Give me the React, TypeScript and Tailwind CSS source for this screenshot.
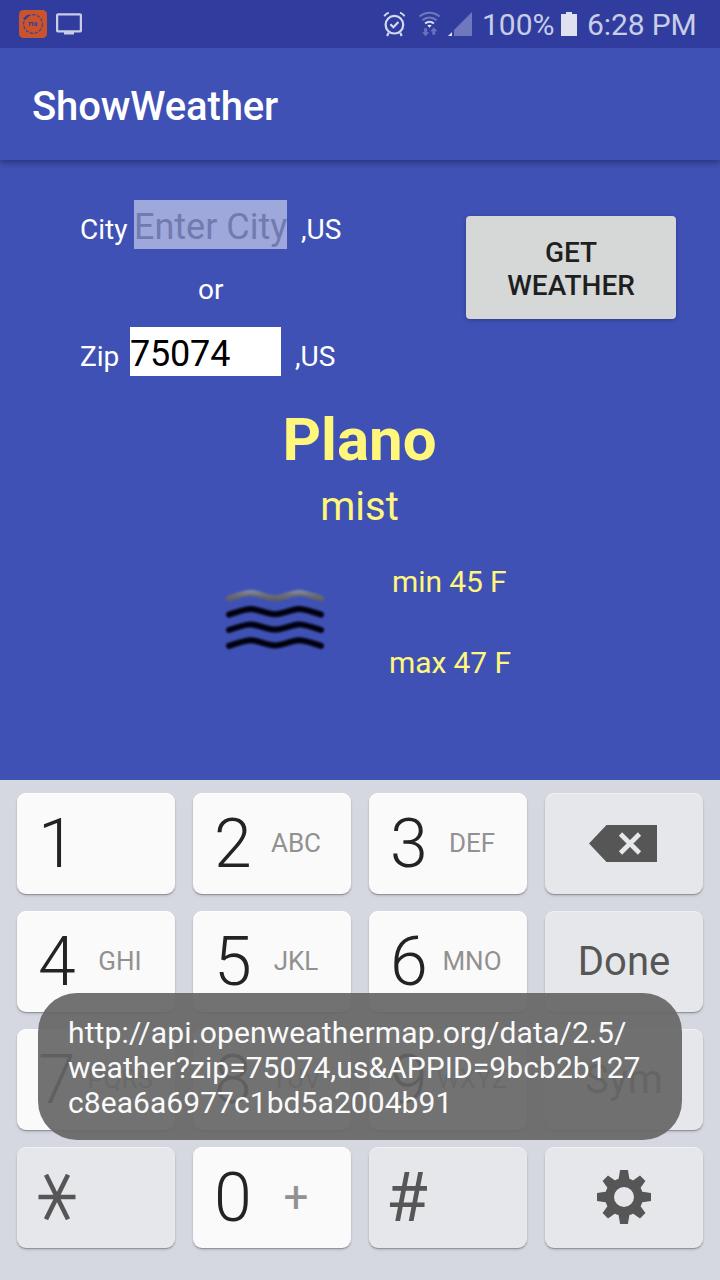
import type { ReactNode } from "react";

function StatusBar() {
  return (
    <header className="relative z-10 flex h-12 items-center bg-[#303d9f] pl-[19px] text-[#c9cde6]">
      <svg width="28" height="28" viewBox="0 0 28 28" className="mb-px shrink-0">
        <rect width="28" height="28" rx="4.5" fill="#c9532c" />
        <circle cx="14" cy="14" r="9.4" fill="none" stroke="#39409a" strokeWidth="1.1" strokeDasharray="3.4 1.4" />
        <path d="M4.8 9.4 9.4 5.4" stroke="#303d9f" strokeWidth="2.2" />
        <path d="M10.6 16v-3.4h3.2V16M16 12.2V16M17.6 12.2V16" fill="none" stroke="#39409a" strokeWidth="1.2" />
      </svg>
      <svg width="26" height="22" viewBox="0 0 26 22" className="ml-[9px] shrink-0">
        <rect x="1.1" y="1.4" width="23.8" height="17" rx="1" fill="none" stroke="#c9cde6" strokeWidth="2.3" />
        <path d="M8 19h10v2.5H8z" fill="#c9cde6" />
      </svg>
      <svg width="22" height="26" viewBox="0 0 22 26" className="ml-[301px] shrink-0" fill="none" stroke="#d5d9ee" strokeWidth="2.2">
        <circle cx="11.4" cy="13.7" r="8.8" />
        <path d="M7.4 13.2 10.4 16.2 15.4 11" />
        <path d="M1.2 5.2C2.4 3.4 4 2.3 5.8 1.6M21.6 5.2C20.4 3.4 18.8 2.3 17 1.6" strokeWidth="1.9" />
        <path d="M5.6 21.6 4.1 25M17.2 21.6 18.7 25" />
      </svg>
      <svg width="22" height="26" viewBox="0 0 22 26" className="ml-[14px] shrink-0" fill="none">
        <g stroke="#7179bd" strokeWidth="2">
          <path d="M.5 5.6C6.3.6 14.7.6 20.5 5.6" />
          <path d="M3.4 9.3c4.1-3.7 10.1-3.7 14.2 0" />
        </g>
        <path d="M6.1 12.5c2.6-2.3 6.2-2.3 8.8 0" stroke="#d5d9ee" strokeWidth="2.2" />
        <path d="M8.3 14.3c1.4-.9 3-.9 4.4 0L10.5 16.8z" fill="#e4e6f4" />
        <path d="M5.2 17.2h2.8v4h2.2L6.6 25.2 3 21.2h2.2zM13.4 23.8h2.8v-3.6h2.2l-3.6-4-3.6 4h2.2z" fill="#6a73ba" />
      </svg>
      <svg width="24" height="24" viewBox="0 0 24 24" className="ml-[7px] shrink-0">
        <path d="M6 24V18L24 0v24z" fill="#7078bd" />
        <path d="M0 24 4 20v4z" fill="#dfe2f2" />
      </svg>
      <span className="ml-[10px] mt-[2px] w-[72px] shrink-0 whitespace-nowrap text-[30px] leading-none">100%</span>
      <svg width="16" height="24" viewBox="0 0 16 24" className="ml-[7px] shrink-0">
        <path d="M5 0h6v2h5v22H0V2h5z" fill="#dfe1f1" />
      </svg>
      <span className="ml-[10px] mt-[2px] whitespace-nowrap text-[30px] leading-none tracking-[-0.1px]">6:28 PM</span>
    </header>
  );
}

function Mist() {
  const wave = "M3 8C12 5 20 2 26 2.4S42 7.6 49 7.6 66 2.8 72 2.4 86 5 95 8";
  return (
    <svg width="98" height="62" viewBox="0 0 98 62" className="ml-[226px] mt-[28px] shrink-0 overflow-visible" fill="none" strokeLinecap="round" strokeWidth="6">
      <defs>
        <linearGradient id="haze" gradientUnits="userSpaceOnUse" x1="0" y1="0" x2="0" y2="11">
          <stop offset="0" stopColor="#8c8fa5" />
          <stop offset="0.4" stopColor="#6d6e74" />
          <stop offset="1" stopColor="#5a5a60" />
        </linearGradient>
        <filter id="soft" filterUnits="userSpaceOnUse" x="-4" y="-4" width="106" height="72">
          <feGaussianBlur stdDeviation="0.9" />
        </filter>
      </defs>
      <g filter="url(#soft)">
        <path d={wave} stroke="url(#haze)" transform="translate(0 0.7)" />
        <path d={wave} stroke="#050508" transform="translate(0 16.6)" />
        <path d={wave} stroke="#050508" transform="translate(0 32)" />
        <path d={wave} stroke="#050508" transform="translate(0 47.8)" />
      </g>
    </svg>
  );
}

function WeatherForm() {
  return (
    <section className="flex h-[220px] pl-20 pt-10 text-[28px] leading-[33px] text-white">
      <div className="flex w-[386px] shrink-0 flex-col">
        <div className="flex h-[49px] items-baseline">
          <span className="w-[54px] shrink-0">City</span>
          <input
            className="h-[49px] w-[153px] bg-white/50 p-0 pt-[5px] text-[36px] leading-[43px] text-black outline-none placeholder:text-[#717bb0] placeholder:opacity-100"
            placeholder="Enter City"
          />
          <span className="ml-[14px]">,US</span>
        </div>
        <p className="ml-[118px] mt-[24px] h-[33px]">or</p>
        <div className="mt-[21px] flex h-[49px] items-baseline">
          <span className="w-[50px] shrink-0">Zip</span>
          <input
            className="h-[49px] w-[151px] bg-white p-0 pt-[5px] text-[36px] leading-[43px] tracking-[-0.2px] text-black outline-none"
            defaultValue="75074"
          />
          <span className="ml-[14px]">,US</span>
        </div>
      </div>
      <button className="mt-4 h-[103px] w-[210px] rounded-[4px] bg-[#d6d8d7] pt-[2px] font-medium text-[#1e1f1f] shadow-[0_1px_4px_rgba(0,0,0,0.25)]">
        GET
        <br />
        WEATHER
      </button>
    </section>
  );
}

function Forecast() {
  return (
    <section className="flex h-[400px] flex-col text-[#fff67c]">
      <h2 className="mt-[25px] pr-px text-center text-[60px] font-bold leading-[70px]">Plano</h2>
      <p className="mt-[8px] pr-px text-center text-[40px] leading-[47px]">mist</p>
      <div className="mt-[32px] flex text-[30px] leading-[35px]">
        <Mist />
        <div className="ml-[65px] tracking-[-0.1px]">
          <p className="ml-[3px] mt-[2px]">min 45 F</p>
          <p className="mt-[46px]">max 47 F</p>
        </div>
      </div>
    </section>
  );
}

function Key({ children, muted = false }: { children: ReactNode; muted?: boolean }) {
  return (
    <button
      className={
        (muted
          ? "bg-[#e6e7eb] justify-center text-[#565656] shadow-[inset_0_1px_1px_#f0f1f3,0_1px_1px_#8f9197,0_2px_3px_rgba(0,0,0,0.12)] "
          : "bg-[#fafafa] text-[#232323] shadow-[inset_0_1px_1px_#ffffff,0_1px_1px_#8f9197,0_2px_3px_rgba(0,0,0,0.12)] ") +
        "flex h-[101px] items-center rounded-[9px] pb-px"
      }
    >
      {children}
    </button>
  );
}

function Digit({ value, letters = "" }: { value: string; letters?: string }) {
  return (
    <Key>
      <span className="ml-[21px] w-[38px] pt-[2px] text-left text-[68px] font-light leading-[80px]">{value}</span>
      <span className={(letters === "+" ? "text-[44px] " : "text-[26px] ") + "w-[88px] whitespace-nowrap text-center leading-none text-[#919191]"}>
        {letters}
      </span>
    </Key>
  );
}

function Gear() {
  return (
    <svg width="54" height="54" viewBox="-27 -27 54 54" fill="#565656">
      {[0, 45, 90, 135, 180, 225, 270, 315].map((angle) => (
        <path key={angle} d="M-5.6-17-3.9-27H3.9L5.6-17z" transform={`rotate(${angle}) scale(${angle % 90 ? 0.98 : 1})`} />
      ))}
      <path fillRule="evenodd" d="M-19 0a19 19 0 1 0 38 0a19 19 0 1 0-38 0zM-10 0a10 10 0 1 0 20 0a10 10 0 1 0-20 0z" />
    </svg>
  );
}

function Keypad() {
  return (
    <section className="relative h-[500px] bg-[#d5d8e0] px-[17px] pt-[13px]">
      <div className="grid grid-cols-4 gap-x-[18px] gap-y-[17px]">
        <Digit value="1" />
        <Digit value="2" letters="ABC" />
        <Digit value="3" letters="DEF" />
        <Key muted>
          <svg width="68" height="37" viewBox="0 0 68 37" className="mr-[2px]">
            <path d="M0 18.5 17.5 0H68v37H17.5z" fill="#565656" />
            <path d="M31.5 9 50.5 28M50.5 9 31.5 28" stroke="#e6e7eb" strokeWidth="4.6" />
          </svg>
        </Key>
        <Digit value="4" letters="GHI" />
        <Digit value="5" letters="JKL" />
        <Digit value="6" letters="MNO" />
        <Key muted>
          <span className="pt-[2px] text-[40px] leading-none">Done</span>
        </Key>
        <Digit value="7" letters="PQRS" />
        <Digit value="8" letters="TUV" />
        <Digit value="9" letters="WXYZ" />
        <Key muted>
          <span className="pt-[2px] text-[40px] leading-none">Sym</span>
        </Key>
        <Key muted>
          <svg width="38" height="46" viewBox="0 0 38 46" className="ml-[21px] mr-auto" stroke="#565656" strokeWidth="4.6">
            <path d="M.5 23h37M8 .8 30 45.2M30 .8 8 45.2" />
          </svg>
        </Key>
        <Digit value="0" letters="+" />
        <Key muted>
          <span className="ml-[17px] mr-auto pt-[2px] text-[68px] font-normal leading-[80px]">#</span>
        </Key>
        <Key muted>
          <Gear />
        </Key>
      </div>
      <div className="absolute left-[38px] top-[213px] flex h-[147px] w-[644px] flex-col rounded-[39px] bg-[#666666]/92 pl-[30px] pt-[22px] text-[30px] leading-[35px] text-[#fafafa]">
        <span className="tracking-[0.14px]">http://api.openweathermap.org/data/2.5/</span>
        <span className="tracking-[0.07px]">weather?zip=75074,us&amp;APPID=9bcb2b127</span>
        <span className="tracking-[0.06px]">c8ea6a6977c1bd5a2004b91</span>
      </div>
    </section>
  );
}

export default function App() {
  return (
    <main className="h-[1280px] w-[720px] overflow-hidden bg-[#3f51b5] font-['Roboto',sans-serif]">
      <StatusBar />
      <div className="flex h-28 items-center bg-[#3f51b5] pl-8 pt-1 shadow-[0_2px_7px_rgba(0,0,0,0.4)]">
        <h1 className="text-[40px] font-medium leading-[47px] tracking-[-0.14px] text-white">ShowWeather</h1>
      </div>
      <WeatherForm />
      <Forecast />
      <Keypad />
    </main>
  );
}
